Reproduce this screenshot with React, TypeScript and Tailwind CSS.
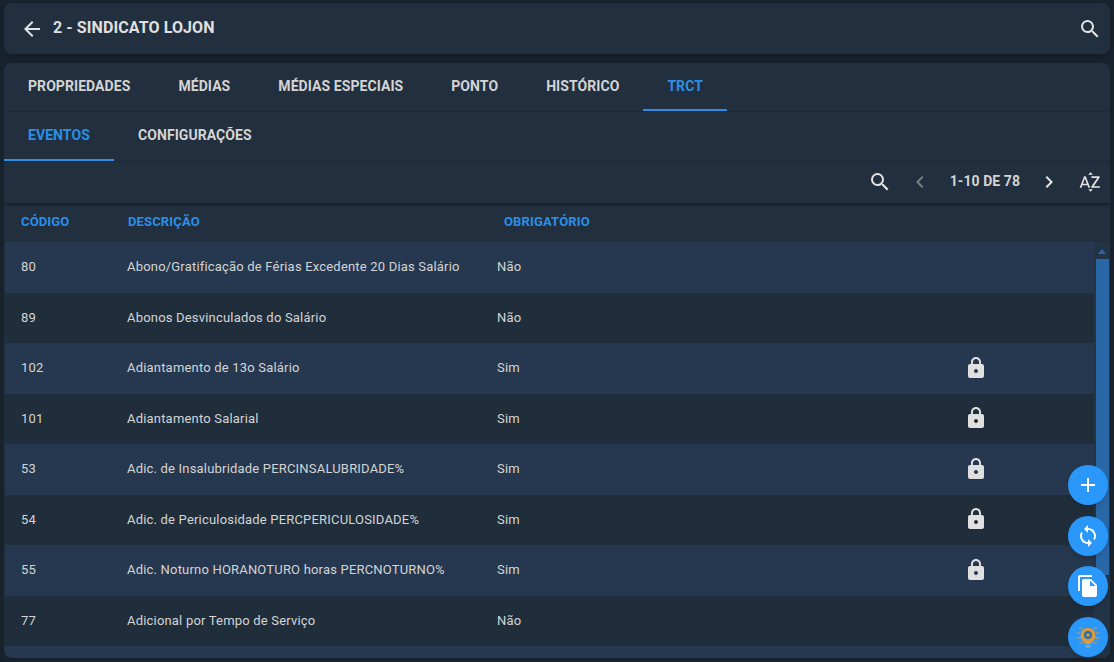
import React from "react";
import { MdArrowBack, MdSearch, MdChevronLeft, MdChevronRight, MdLock, MdAdd, MdSync, MdFileCopy, MdSortByAlpha } from "react-icons/md";

const rows: [string, string, string, boolean][] = [
  ["80", "Abono/Gratificação de Férias Excedente 20 Dias Salário", "Não", false],
  ["89", "Abonos Desvinculados do Salário", "Não", false],
  ["102", "Adiantamento de 13o Salário", "Sim", true],
  ["101", "Adiantamento Salarial", "Sim", true],
  ["53", "Adic. de Insalubridade PERCINSALUBRIDADE%", "Sim", true],
  ["54", "Adic. de Periculosidade PERCPERICULOSIDADE%", "Sim", true],
  ["55", "Adic. Noturno HORANOTURO horas PERCNOTURNO%", "Sim", true],
  ["77", "Adicional por Tempo de Serviço", "Não", false],
  ["", "", "", false],
];

const tabs = ["PROPRIEDADES", "MÉDIAS", "MÉDIAS ESPECIAIS", "PONTO", "HISTÓRICO", "TRCT"];

function Bulb() {
  return (
    <svg width="28" height="28" viewBox="0 0 28 28" fill="none">
      <path d="M14 5a7.5 7.5 0 0 0-4.6 13.4c.9.7 1.3 1.5 1.3 2.6h6.6c0-1.1.4-1.9 1.3-2.6A7.5 7.5 0 0 0 14 5z" fill="#d99a3c" />
      <circle cx="14" cy="12" r="4" fill="#2a6fb0" />
      <circle cx="14" cy="12" r="1.8" fill="#d99a3c" />
      <rect x="11.5" y="22" width="5" height="2.6" rx="0.6" fill="#8fa3b5" />
      <path d="M5 5h2.5l2 2M2.5 10h3.5M2.5 15h3.5l1-1M5 20h2.5l2-2M23 5h-2.5l-2 2M25.5 10H22M25.5 15H22l-1-1M23 20h-2.5l-2-2" stroke="#d99a3c" strokeWidth="1" />
    </svg>
  );
}

function Fab({ children }: { children: React.ReactNode }) {
  return (
    <div className="w-10 h-10 rounded-full bg-[#2a98fb] flex items-center justify-center text-white shadow-md">
      {children}
    </div>
  );
}

export default function App() {
  return (
    <div className="relative h-[662px] w-[1114px] overflow-hidden bg-[#18222d] px-1 pt-[3px] font-['Roboto',sans-serif] text-[#dcdcdc]">
      <header className="h-[51px] rounded-lg bg-[#212f3e] flex items-center pl-4 pr-2 shadow-md">
        <MdArrowBack size={24} className="text-[#e4e4e4]" />
        <h1 className="ml-[9px] mb-[2px] text-base font-bold tracking-[0.1px] leading-none text-[#e0e0e0]">2 - SINDICATO LOJON</h1>
        <MdSearch size={24} className="ml-auto text-[#e4e4e4]" />
      </header>

      <main className="mt-[9px] h-[595px] rounded-lg bg-[#212f3e] overflow-hidden flex flex-col">
        <nav className="h-[49px] shrink-0 flex border-b border-[#1c2937]">
          {tabs.map((t) => (
            <div
              key={t}
              className={`px-6 flex items-center text-sm font-bold tracking-[0.07px] border-b-2 ${t === "TRCT" ? "text-[#2a8fe8] border-[#2a8fe8]" : "text-[#d4d4d4] border-transparent"}`}
            >
              {t}
            </div>
          ))}
        </nav>

        <nav className="h-[50px] shrink-0 flex border-b border-[#1c2937]">
          <div className="px-6 pb-px w-[110px] flex items-center text-sm font-bold tracking-[0.07px] text-[#2a8fe8] border-b-2 border-[#2a8fe8]">EVENTOS</div>
          <div className="px-6 pb-[3px] flex items-center text-sm font-bold tracking-[0.07px] text-[#d4d4d4]">CONFIGURAÇÕES</div>
        </nav>

        <div className="h-[41px] shrink-0 flex items-center justify-end pr-2 pb-[2px] shadow-[0_2px_3px_rgba(0,0,0,0.35)] relative z-10">
          <MdSearch size={24} className="text-[#e4e4e4]" />
          <MdChevronLeft size={24} className="ml-4 text-[#777f87]" />
          <span className="ml-[18px] text-[14px] font-bold tracking-[0.07px] text-[#d4d4d4]">1-10 DE 78</span>
          <MdChevronRight size={24} className="ml-[17px] text-[#e4e4e4]" />
          <MdSortByAlpha size={24} className="ml-[17px] text-[#e4e4e4]" />
        </div>

        <div className="h-[39px] shrink-0 ml-px pb-[2px] grid grid-cols-[123px_376px_1fr] items-center text-[13px] tracking-[0.15px] font-bold text-[#2a8fe8]">
          <div className="pl-4">CÓDIGO</div>
          <div>DESCRIÇÃO</div>
          <div>OBRIGATÓRIO</div>
        </div>

        <div className="relative flex-1 ml-px overflow-hidden">
          {rows.map(([code, desc, req, locked], i) => (
            <div
              key={i}
              className={`h-[50.5px] pb-px grid grid-cols-[122px_370px_1fr_60px_104px] items-center text-[13px] tracking-[0.19px] text-[#d4d4d4] ${i % 2 === 0 ? "bg-[#26384f]" : "bg-[#202e3c]"}`}
            >
              <div className="pl-4">{code}</div>
              <div>{desc}</div>
              <div>{req}</div>
              <div className="flex justify-center">{locked && <MdLock size={24} className="text-[#e0e0e0]" />}</div>
              <div />
            </div>
          ))}
          <div className="absolute top-0 right-0 bottom-0 w-4 flex flex-col items-start pl-[2px] bg-[#243447]">
            <div className="mt-[7px] ml-[2px] w-0 h-0 border-x-[4px] border-x-transparent border-b-[5px] border-b-[#2a67a6]" />
            <div className="mt-[5px] w-[13px] h-[316px] bg-[#2a67a6]" />
          </div>
        </div>
      </main>

      <div className="absolute left-[1068px] top-[465px] flex flex-col gap-[10.5px]">
        <Fab><MdAdd size={24} /></Fab>
        <Fab><MdSync size={24} /></Fab>
        <Fab><MdFileCopy size={24} /></Fab>
        <Fab><Bulb /></Fab>
      </div>
    </div>
  );
}
